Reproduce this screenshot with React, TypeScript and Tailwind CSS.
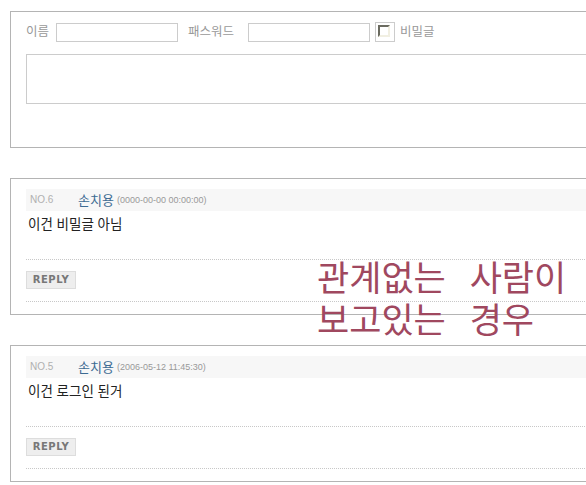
import React from 'react';

const KR = { fontFamily: '"Liberation Sans", "Noto Sans CJK KR", sans-serif' };

interface Comment {
  no: number;
  name: string;
  date: string;
  body: string;
}

const comments: Comment[] = [
  { no: 6, name: '손치용', date: '(0000-00-00 00:00:00)', body: '이건 비밀글 아님' },
  { no: 5, name: '손치용', date: '(2006-05-12 11:45:30)', body: '이건 로그인 된거' },
];

function CommentBox({ c }: { c: Comment }) {
  return (
    <div className="mt-[30px] ml-[10px] w-[640px] h-[137px] border border-[#b4b4b4] pl-[15px] pt-[10px]">
      {/* 헤더 */}
      <div className="h-[22px] bg-[#f7f7f7] flex items-center pl-[4px]">
        <span className="w-[48px] text-[10px] text-[#b0b0b0] leading-none">NO.{c.no}</span>
        <span className="text-[13px] text-[#3d6b92] leading-none">{c.name}</span>
        <span className="ml-[3px] text-[9px] text-[#999] leading-none">{c.date}</span>
      </div>
      {/* 본문 */}
      <div className="h-[48px] pl-[2px] pt-[5px] text-[13.5px] text-[#222] leading-[18px]">{c.body}</div>
      <div className="border-t border-dotted border-[#c8c8c8]" />
      <div className="pt-[11px] pb-[12px]">
        <button
          type="button"
          className="w-[50px] h-[18px] bg-[#eee] border border-[#ddd] text-[10px] font-bold text-[#777] leading-none tracking-[0.5px] flex items-center justify-center"
          style={{ fontFamily: '"DejaVu Sans", sans-serif' }}
        >
          REPLY
        </button>
      </div>
      <div className="border-t border-dotted border-[#c8c8c8]" />
    </div>
  );
}

export default function App() {
  return (
    <div className="relative w-[586px] h-[485px] overflow-hidden bg-white" style={KR}>
      {/* 작성 폼 */}
      <div className="mt-[11px] ml-[10px] w-[640px] h-[137px] border border-[#b4b4b4] pl-[15px] pt-[10px]">
        <div className="flex items-center h-[20px] text-[12.5px] text-[#999]">
          <span className="w-[30px]">이름</span>
          <div className="w-[122px] h-[19px] border border-[#ccc]" />
          <span className="ml-[10px] w-[60px]">패스워드</span>
          <div className="w-[122px] h-[19px] border border-[#ccc]" />
          <div className="ml-[5px] w-[20px] h-[20px] border border-[#ccc] pl-[2px] pt-[2px]">
            <div className="w-[12px] h-[12px] bg-white border-2 border-t-[#6b6b60] border-l-[#6b6b60] border-r-[#f1efe2] border-b-[#f1efe2]" />
          </div>
          <span className="ml-[5px]">비밀글</span>
        </div>
        <div className="mt-[12px] h-[50px] border border-[#ccc]" />
      </div>

      {comments.map((c) => (
        <CommentBox key={c.no} c={c} />
      ))}

      {/* 주석 텍스트 */}
      <div
        className="absolute left-[317px] top-[255px] text-[35px] leading-[42px] text-[#a0485f] whitespace-pre [word-spacing:16px]"
        style={{ fontFamily: '"Noto Sans CJK KR", sans-serif' }}
      >
        {'관계없는 사람이\n보고있는 경우'}
      </div>
    </div>
  );
}
